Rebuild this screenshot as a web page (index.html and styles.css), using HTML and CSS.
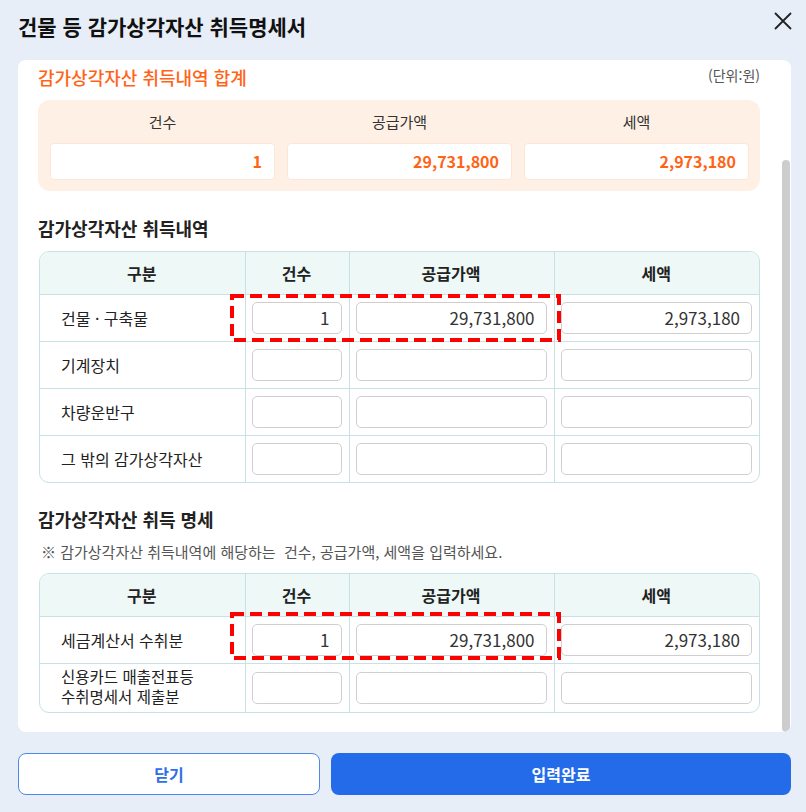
FILE: index.html
```html
<!DOCTYPE html>
<html lang="ko">
<head>
  <meta charset="UTF-8">
  <title>건물 등 감가상각자산 취득명세서</title>
  <link rel="stylesheet" href="styles.css">
</head>
<body>
<div class="dialog">
  <div class="dialogHead">
    <h1>건물 등 감가상각자산 취득명세서</h1>
    <button class="closeBtn" aria-label="닫기">
      <svg width="18" height="18" viewBox="0 0 18 18"><path d="M1 1L17 17M17 1L1 17" stroke="#222" stroke-width="1.8" fill="none"/></svg>
    </button>
  </div>

  <div class="panel">
    <div class="panelBody">
      <div class="sumHead">
        <h2>감가상각자산 취득내역 합계</h2>
        <span class="unit">(단위:원)</span>
      </div>
      <div class="sumBox">
        <span class="sumLabel">건수</span>
        <span class="sumLabel">공급가액</span>
        <span class="sumLabel">세액</span>
        <div class="sumValue">1</div>
        <div class="sumValue">29,731,800</div>
        <div class="sumValue">2,973,180</div>
      </div>

      <h3 class="secTitle">감가상각자산 취득내역</h3>
      <div class="tblWrap">
        <table class="dataTbl">
          <colgroup><col class="c1"><col class="c2"><col class="c3"><col class="c4"></colgroup>
          <thead>
          <tr><th>구분</th><th>건수</th><th>공급가액</th><th>세액</th></tr>
          </thead>
          <tbody>
          <tr>
            <td class="label">건물 · 구축물</td>
            <td><input class="num" value="1"></td>
            <td><input class="num" value="29,731,800"></td>
            <td><input class="num" value="2,973,180"></td>
          </tr>
          <tr>
            <td class="label">기계장치</td>
            <td><input class="num"></td><td><input class="num"></td><td><input class="num"></td>
          </tr>
          <tr>
            <td class="label">차량운반구</td>
            <td><input class="num"></td><td><input class="num"></td><td><input class="num"></td>
          </tr>
          <tr>
            <td class="label">그 밖의 감가상각자산</td>
            <td><input class="num"></td><td><input class="num"></td><td><input class="num"></td>
          </tr>
          </tbody>
        </table>
        <div class="mark mark1">
          <svg width="331" height="48"><rect x="2" y="2" width="327" height="44" fill="none" stroke="#ff0000" stroke-width="4" stroke-dasharray="12 6"/></svg>
        </div>
      </div>

      <h3 class="secTitle second">감가상각자산 취득 명세</h3>
      <p class="note">※ 감가상각자산 취득내역에 해당하는 &nbsp;건수, 공급가액, 세액을 입력하세요.</p>
      <div class="tblWrap">
        <table class="dataTbl">
          <colgroup><col class="c1"><col class="c2"><col class="c3"><col class="c4"></colgroup>
          <thead>
          <tr><th>구분</th><th>건수</th><th>공급가액</th><th>세액</th></tr>
          </thead>
          <tbody>
          <tr>
            <td class="label">세금계산서 수취분</td>
            <td><input class="num" value="1"></td>
            <td><input class="num" value="29,731,800"></td>
            <td><input class="num" value="2,973,180"></td>
          </tr>
          <tr class="tall">
            <td class="label">
              <span class="line">신용카드 매출전표등</span>
              <span class="line">수취명세서 제출분</span>
            </td>
            <td><input class="num"></td><td><input class="num"></td><td><input class="num"></td>
          </tr>
          </tbody>
        </table>
        <div class="mark mark2">
          <svg width="331" height="48"><rect x="2" y="2" width="327" height="44" fill="none" stroke="#ff0000" stroke-width="4" stroke-dasharray="12 6"/></svg>
        </div>
      </div>
    </div>
    <div class="scrollTrack"><div class="scrollThumb"></div></div>
  </div>

  <div class="btnGroup">
    <button class="btn cancel">닫기</button>
    <button class="btn submit">입력완료</button>
  </div>
</div>
</body>
</html>
```

FILE: styles.css
```css
/* 기본 */
* {
  box-sizing: border-box;
}
body {
  margin: 0;
  background: #e8eef8;
  font-family: "Noto Sans CJK KR", "Noto Sans", sans-serif;
  color: #222;
}
h1, h2, h3, p {
  margin: 0;
}
button {
  padding: 0;
  border: none;
  background: none;
  font-family: inherit;
  cursor: pointer;
}

.dialog {
  width: 806px;
  height: 812px;
}

/* 헤더 */
.dialogHead {
  height: 60px;
  display: flex;
  justify-content: space-between;
  align-items: flex-start;
  padding: 12px 14px 0 18px;
}
.dialogHead h1 {
  font-size: 21px;
  line-height: 28px;
  font-weight: 700;
  color: #111;
}
.closeBtn {
  width: 18px;
  height: 18px;
  display: block;
}
.closeBtn svg {
  display: block;
}

/* 본문 패널 */
.panel {
  margin-left: 18px;
  width: 773px;
  height: 672px;
  background: #fff;
  border-radius: 8px;
  display: flex;
  overflow: hidden;
}
.panelBody {
  flex: 1;
  padding: 5px 22px 0 20px;
}
.scrollTrack {
  width: 8px;
  margin-right: 1px;
  display: flex;
  flex-direction: column;
}
.scrollThumb {
  flex: 1;
  margin-top: 100px;
  background: #cdcdcd;
  border-radius: 4px;
}

.sumHead {
  display: flex;
  justify-content: space-between;
  align-items: center;
}
.sumHead h2 {
  font-size: 18px;
  line-height: 24px;
  font-weight: 500;
  color: #ff6416;
}
.unit {
  font-size: 14px;
  color: #555;
  margin-top: -4px;
}

.sumBox {
  margin-top: 11px;
  background: #fff0e5;
  border-radius: 12px;
  padding: 12px 11px 11px 12px;
  display: grid;
  grid-template-columns: repeat(3, 1fr);
  column-gap: 12px;
  row-gap: 11px;
}
.sumLabel {
  text-align: center;
  font-size: 15px;
  line-height: 20px;
  color: #333;
}
.sumValue {
  height: 37px;
  background: #fff;
  border: 1px solid #fde6d6;
  border-radius: 4px;
  text-align: right;
  padding-right: 12px;
  font-size: 16px;
  line-height: 35px;
  font-weight: 700;
  color: #ff6416;
}

.secTitle {
  margin-top: 25px;
  margin-bottom: 11px;
  font-size: 18px;
  line-height: 24px;
  font-weight: 700;
  color: #222;
}
.secTitle.second {
  margin-top: 24px;
  margin-bottom: 11px;
}
.note {
  padding-left: 3px;
  margin-bottom: 11px;
  font-size: 15px;
  line-height: 20px;
  color: #555;
}

/* 표 */
.tblWrap {
  position: relative;
  margin-left: 1px;
  border: 1px solid #c6e2e5;
  border-radius: 10px;
}
.dataTbl {
  width: 100%;
  border-collapse: collapse;
  table-layout: fixed;
}
.dataTbl col.c1 { width: 205px; }
.dataTbl col.c2 { width: 104px; }
.dataTbl col.c3 { width: 205px; }
.dataTbl col.c4 { width: auto; }

.dataTbl th,
.dataTbl td {
  border: 1px solid #c6e2e5;
  padding: 0 7px 0 6px;
}
.dataTbl tr > :first-child { border-left: none; }
.dataTbl tr > :last-child { border-right: none; }
.dataTbl thead th { border-top: none; }
.dataTbl tbody tr:last-child td { border-bottom: none; }

.dataTbl th {
  height: 42px;
  background: #eef8f7;
  font-size: 16px;
  font-weight: 700;
  color: #222;
}
.dataTbl thead th:first-child { border-top-left-radius: 10px; }
.dataTbl thead th:last-child { border-top-right-radius: 10px; }
.dataTbl td {
  height: 47px;
}
.dataTbl tr.tall td {
  height: 49px;
}
.dataTbl td.label {
  padding-left: 21px;
  font-size: 16px;
  line-height: 20px;
  color: #222;
}
.dataTbl td.label .line {
  display: block;
  font-size: 15.5px;
  line-height: 21px;
  height: 21px;
  margin-top: -2px;
}
.dataTbl td.label .line + .line {
  margin-top: -1px;
}
.num {
  display: block;
  width: 100%;
  height: 32px;
  border: 1px solid #cfcfcf;
  border-radius: 5px;
  padding: 0 11px;
  text-align: right;
  font-family: inherit;
  font-size: 17px;
  color: #333;
  background: #fff;
}

/* 빨간 점선 표시 */
.mark {
  position: absolute;
  left: 190px;
  width: 331px;
  height: 48px;
}
.mark svg {
  display: block;
}
.mark1 { top: 42px; }
.mark2 { top: 38px; }

/* 하단 버튼 */
.btnGroup {
  margin-top: 21px;
  padding: 0 15px 0 18px;
  display: grid;
  grid-template-columns: 302px 1fr;
  column-gap: 11px;
}
.btn {
  height: 42px;
  border-radius: 8px;
  font-size: 16px;
  font-weight: 700;
}
.btn.cancel {
  background: #fff;
  border: 1.5px solid #4d88ee;
  color: #2f6ee6;
}
.btn.submit {
  background: #246be9;
  color: #fff;
}
```
